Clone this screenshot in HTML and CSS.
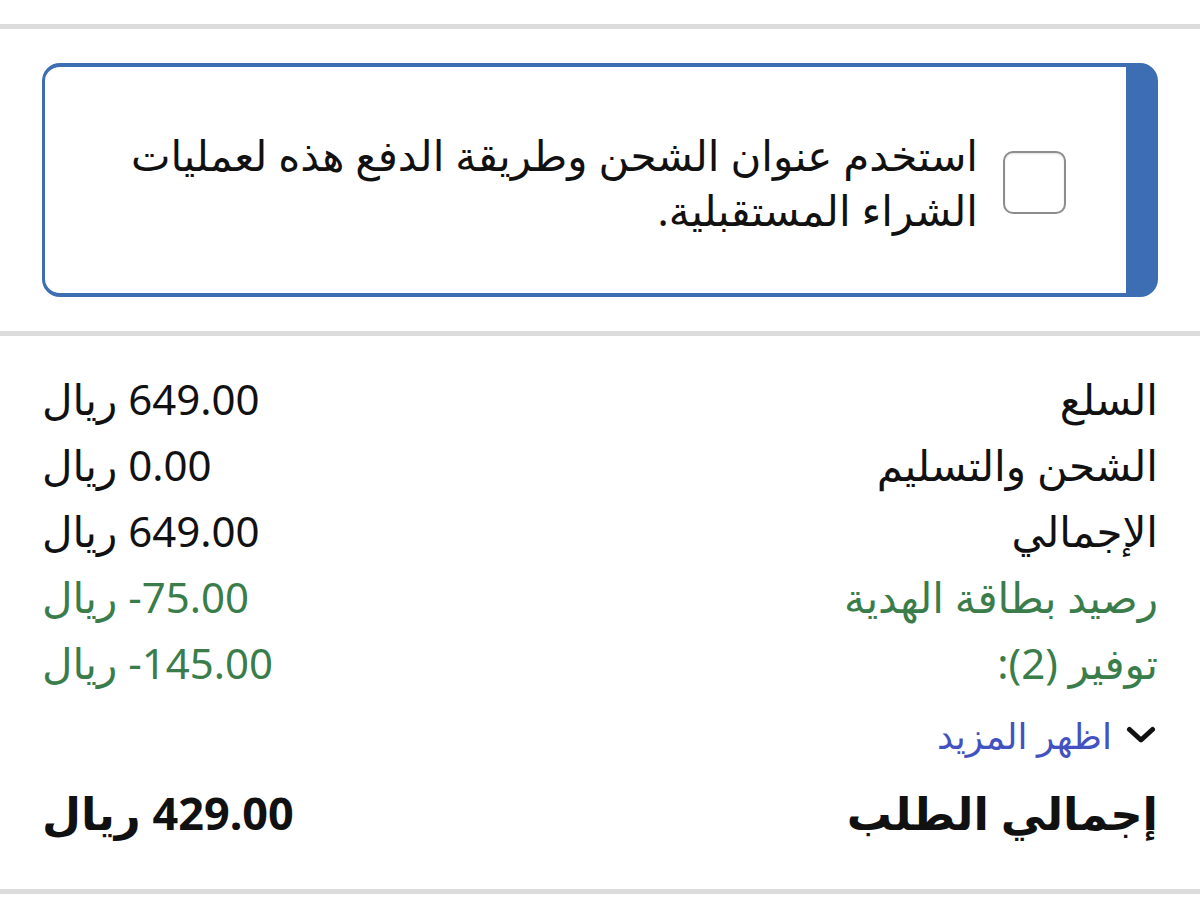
FILE: index.html
```html
<!DOCTYPE html>
<html lang="ar" dir="rtl">
<head>
<meta charset="utf-8">
<title>ملخص الطلب</title>
<link rel="stylesheet" href="styles.css">
</head>
<body>
<div class="divider top"></div>
<section class="save-section">
  <label class="save-box">
    <span class="checkbox"></span>
    <span class="save-text">استخدم عنوان الشحن وطريقة الدفع هذه لعمليات الشراء المستقبلية.</span>
  </label>
</section>
<div class="divider"></div>
<section class="summary">
  <div class="row"><span class="label">السلع</span><span class="value">649.00 ريال</span></div>
  <div class="row"><span class="label">الشحن والتسليم</span><span class="value">0.00 ريال</span></div>
  <div class="row"><span class="label">الإجمالي</span><span class="value">649.00 ريال</span></div>
  <div class="row green"><span class="label">رصيد بطاقة الهدية</span><span class="value">75.00- ريال</span></div>
  <div class="row green"><span class="label">توفير (2):</span><span class="value">145.00- ريال</span></div>
  <div class="more">
    <svg class="chev" viewBox="0 0 30 18" width="30" height="18"><path d="M3.5 3.5 L15 14 L26.5 3.5" fill="none" stroke="#111" stroke-width="5" stroke-linecap="round" stroke-linejoin="round"/></svg>
    <span class="more-link">اظهر المزيد</span>
  </div>
  <div class="row total"><span class="label">إجمالي الطلب</span><span class="value">429.00 ريال</span></div>
</section>
<div class="divider"></div>
</body>
</html>
```
FILE: styles.css
```css
html, body {
  margin: 0;
  padding: 0;
  background: #ffffff;
}
body {
  font-family: "Noto Sans", "DejaVu Sans", sans-serif;
  color: #111111;
  direction: rtl;
}
.divider {
  height: 5px;
  background: #dcdcdc;
}
.divider.top {
  margin-top: 24px;
}
.save-section {
  padding: 34px 42px 34px 42px;
}
.save-box {
  display: flex;
  align-items: center;
  gap: 25px;
  height: 234px;
  box-sizing: border-box;
  border: 4px solid #3d6db3;
  border-left-width: 3px;
  border-right-width: 32px;
  border-radius: 18px;
  padding: 4px 60px 0 60px;
}
.checkbox {
  flex: none;
  width: 63px;
  height: 63px;
  box-sizing: border-box;
  border: 2px solid #8c8c8c;
  border-radius: 10px;
  background: #fff;
  box-shadow: inset 0 1px 2px rgba(0,0,0,0.12);
}
.save-text {
  font-size: 42px;
  line-height: 55px;
  font-weight: 400;
  color: #111;
}
.summary {
  padding: 29px 42px 40px 42px;
}
.row {
  display: flex;
  justify-content: space-between;
  align-items: center;
  height: 66px;
  font-size: 42px;
}
.value {
  letter-spacing: 0.5px;
}
.row.green {
  color: #3a7d4b;
}
.more {
  display: flex;
  align-items: center;
  gap: 14px;
  height: 80px;
  font-size: 36px;
}
.chev {
  display: block;
  margin-right: 2px;
}
.more-link {
  color: #4352c0;
}
.row.total {
  font-weight: 700;
  font-size: 45px;
  height: 74px;
}
.row.total .value {
  letter-spacing: 1px;
}
```
